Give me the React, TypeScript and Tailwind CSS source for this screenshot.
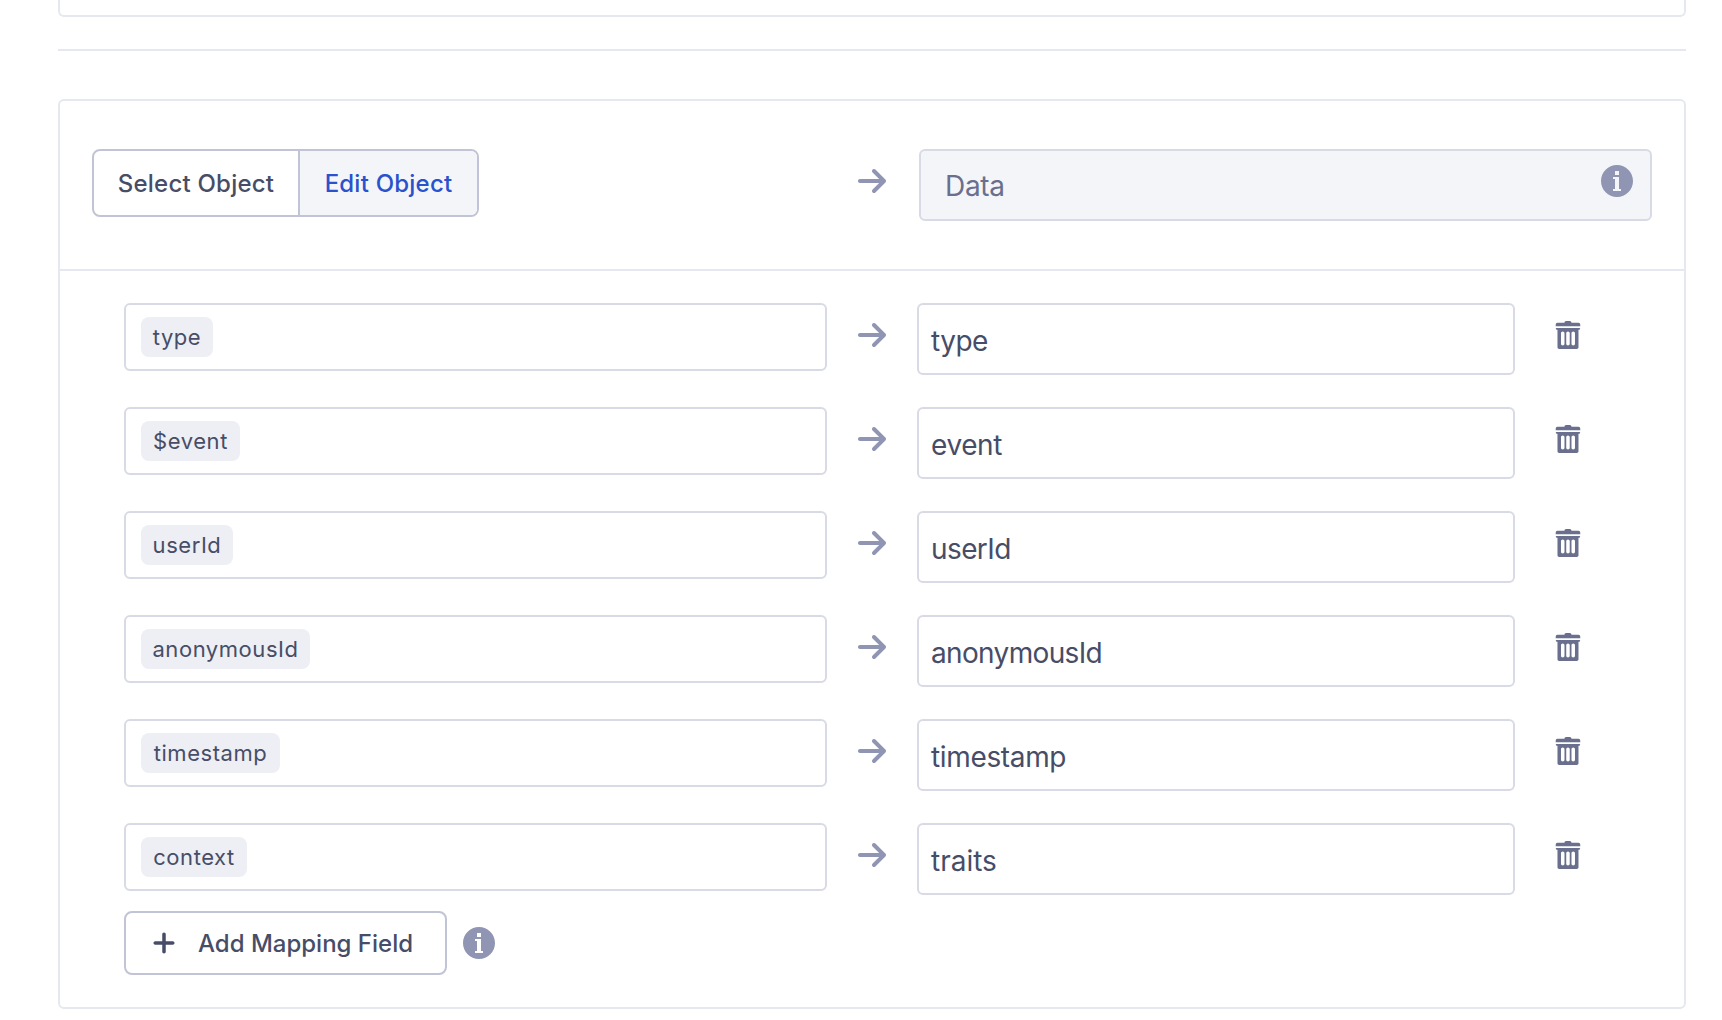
import React from "react";

const ARROW =
  "M14.7 7.29l-5-5a.965.965 0 00-.71-.3 1.003 1.003 0 00-.71 1.71l3.29 3.29H1.99c-.55 0-1 .45-1 1s.45 1 1 1h9.59l-3.29 3.29a1.003 1.003 0 001.42 1.42l5-5c.18-.18.29-.43.29-.71s-.12-.52-.3-.7z";
const TRASH =
  "M14.49 3.99h-13c-.28 0-.5.22-.5.5s.22.5.5.5h.5v10c0 .55.45 1 1 1h10c.55 0 1-.45 1-1v-10h.5c.28 0 .5-.22.5-.5s-.22-.5-.5-.5zm-8.5 9c0 .55-.45 1-1 1s-1-.45-1-1v-6c0-.55.45-1 1-1s1 .45 1 1v6zm3 0c0 .55-.45 1-1 1s-1-.45-1-1v-6c0-.55.45-1 1-1s1 .45 1 1v6zm3 0c0 .55-.45 1-1 1s-1-.45-1-1v-6c0-.55.45-1 1-1s1 .45 1 1v6zm2-12h-4c0-.55-.45-1-1-1h-2c-.55 0-1 .45-1 1h-4c-.55 0-1 .45-1 1v1h14v-1c0-.55-.45-1-1-1z";
const INFO =
  "M8 0C3.58 0 0 3.58 0 8s3.58 8 8 8 8-3.58 8-8-3.58-8-8-8zM7 3h2v2H7V3zm3 10H6v-1h1V7H6V6h3v6h1v1z";
const PLUS =
  "M13 7H9V3c0-.55-.45-1-1-1s-1 .45-1 1v4H3c-.55 0-1 .45-1 1s.45 1 1 1h4v4c0 .55.45 1 1 1s1-.45 1-1V9h4c.55 0 1-.45 1-1s-.45-1-1-1z";

function Icon({ d, className }: { d: string; className: string }) {
  return (
    <svg viewBox="0 0 16 16" fill="currentColor" className={`shrink-0 ${className}`}>
      <path fillRule="evenodd" clipRule="evenodd" d={d} />
    </svg>
  );
}

const rows = [
  { from: "type", to: "type", tag: "w-[72px]", spacing: "tracking-[-0.5px]" },
  { from: "$event", to: "event", tag: "w-[99px]", spacing: "tracking-[-0.4px]" },
  { from: "userId", to: "userId", tag: "w-[92px]", spacing: "tracking-[-0.6px]" },
  { from: "anonymousId", to: "anonymousId", tag: "w-[169px]", spacing: "tracking-[-0.65px]" },
  { from: "timestamp", to: "timestamp", tag: "w-[139px]", spacing: "tracking-[-0.35px]" },
  { from: "context", to: "traits", tag: "w-[106px]", spacing: "tracking-normal" },
];

function MappingRow({ from, to, tag, spacing }: { from: string; to: string; tag: string; spacing: string }) {
  return (
    <div className="flex h-[72px] items-start">
      <div className="flex h-[68px] w-[703px] items-start rounded-md border-2 border-[#d8dae5] pt-3 pl-[15px]">
        <span
          className={`flex h-10 items-center justify-center whitespace-nowrap rounded-lg bg-[#edeff5] text-[22px] tracking-[0.55px] ${tag}`}
        >
          {from}
        </span>
      </div>
      <Icon d={ARROW} className="mt-4 ml-[29px] size-8 text-[#8f95b2]" />
      <div
        className={`ml-[29px] flex h-[72px] w-[598px] items-center rounded-md border-2 border-[#d8dae5] pt-[3px] pl-3 text-[28px] ${spacing}`}
      >
        {to}
      </div>
      <Icon d={TRASH} className="mt-[18px] ml-[39px] size-7 text-[#696f8c]" />
    </div>
  );
}

export default function App() {
  return (
    <div className="h-[1020px] w-[1722px] overflow-hidden bg-white pl-[58px] font-['Inter',sans-serif] text-[#474d66]">
      <div className="h-[17px] w-[1628px] rounded-b-md border-2 border-t-0 border-[#e6e8f0]" />
      <div className="mt-8 h-0.5 w-[1628px] bg-[#e6e8f0]" />
      <section className="mt-12 h-[910px] w-[1628px] rounded-md border-2 border-[#e6e8f0]">
        <header className="flex h-[170px] items-start border-b-2 border-[#e6e8f0] pt-12 pl-8">
          <div className="flex h-[68px] w-[387px] overflow-hidden rounded-lg border-2 border-[#c1c4d6] text-2xl font-medium tracking-[0.22px]">
            <button className="w-[206px] whitespace-nowrap border-r-2 border-[#c1c4d6] pt-0.5">Select Object</button>
            <button className="flex-1 whitespace-nowrap bg-[#f4f5f9] pt-0.5 text-[#2952cc]">Edit Object</button>
          </div>
          <Icon d={ARROW} className="mt-4 ml-[377px] size-8 text-[#8f95b2]" />
          <div className="ml-[31px] flex h-[72px] w-[733px] items-start justify-between rounded-md border-2 border-[#d8dae5] bg-[#f4f5f9] pt-3.5 pr-[17px] pl-6 text-[28px] text-[#696f8c]">
            <span className="mt-px leading-10 tracking-[-0.3px]">Data</span>
            <Icon d={INFO} className="size-8 text-[#8f95b2]" />
          </div>
        </header>
        <div className="flex flex-col gap-8 pt-8 pl-16">
          {rows.map((row) => (
            <MappingRow key={row.from} {...row} />
          ))}
        </div>
        <div className="mt-4 flex items-center pl-16">
          <button className="flex h-16 w-[323px] items-center whitespace-nowrap rounded-lg border-2 border-[#c1c4d6] pl-6 text-2xl font-medium tracking-normal">
            <Icon d={PLUS} className="mr-5 size-7" />
            <span className="pt-0.5">Add Mapping Field</span>
          </button>
          <Icon d={INFO} className="ml-4 size-8 text-[#8f95b2]" />
        </div>
      </section>
    </div>
  );
}
